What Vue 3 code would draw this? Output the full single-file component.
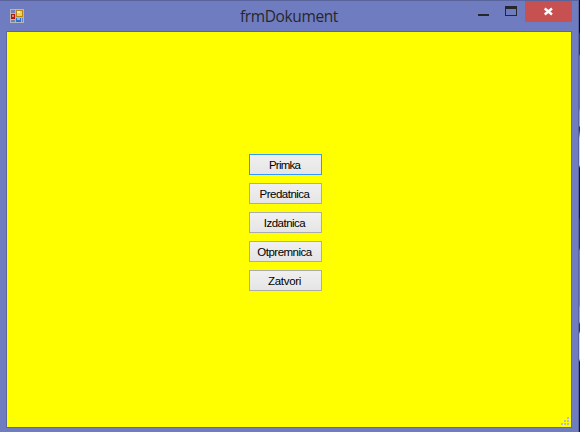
<script setup>
const actions = [
  { label: 'Primka', key: 'primka' },
  { label: 'Predatnica', key: 'predatnica' },
  { label: 'Izdatnica', key: 'izdatnica' },
  { label: 'Otpremnica', key: 'otpremnica' },
  { label: 'Zatvori', key: 'zatvori' },
]
</script>

<template>
  <div class="desktop">
    <div class="window">
      <header class="titlebar">
        <svg class="app-icon" width="14" height="14" viewBox="0 0 14 14" shape-rendering="crispEdges">
          <rect width="14" height="14" fill="#b5b7bd" />
          <rect x="1" y="1" width="4" height="3" fill="#7480b8" />
          <rect x="1" y="5" width="4" height="5" fill="#b11a12" />
          <rect x="2" y="6" width="2" height="2" fill="#e88478" />
          <rect x="1" y="11" width="4" height="2" fill="#7480b8" />
          <rect x="6" y="1" width="7" height="7" fill="#b78614" />
          <rect x="7" y="2" width="5" height="5" fill="#f5cf5a" />
          <rect x="7" y="2" width="3" height="2" fill="#fff0ae" />
          <rect x="6" y="9" width="5" height="4" fill="#2e72cf" />
          <rect x="7" y="9" width="3" height="2" fill="#8bbcf5" />
          <rect x="12" y="9" width="1" height="4" fill="#7480b8" />
        </svg>
        <h1 class="title">frmDokument</h1>
        <div class="controls">
          <svg width="92" height="21" viewBox="0 0 92 21" shape-rendering="crispEdges">
            <rect x="45" y="13" width="11" height="2" fill="#26272b" />
            <path d="M72 5h12v10h-12zM73 8v6h10v-6z" fill="#26272b" fill-rule="evenodd" />
          </svg>
          <button class="close" aria-label="Close">
            <svg width="47" height="21" viewBox="0 0 47 21">
              <path d="M19.7 7.5L27 13.5M27 7.5L19.7 13.5" stroke="#fff" stroke-width="2.4" />
            </svg>
          </button>
        </div>
      </header>
      <main class="client">
        <nav class="actions">
          <button v-for="(a, i) in actions" :key="a.key" class="action" :class="[a.key, { focused: i === 0 }]">
            <span>{{ a.label }}</span>
          </button>
        </nav>
        <svg class="grip" width="8" height="8" viewBox="0 0 8 8" shape-rendering="crispEdges">
          <path d="M6 0h2v2h-2zM3 3h2v2h-2zM6 3h2v2h-2zM0 6h2v2h-2zM3 6h2v2h-2zM6 6h2v2h-2z" fill="#bdbdbd" />
        </svg>
      </main>
    </div>
  </div>
</template>

<style>
body { margin: 0; overflow: hidden; }
</style>

<style scoped>
.desktop {
  box-sizing: border-box;
  width: 580px;
  height: 432px;
  padding-right: 1px;
  background: linear-gradient(#080a0c 0 32px, #3a342c 34px 54px, #5878a0 56px 108px, #b8a280 112px 126px, #35332d 127px 130px, #d0ccd0 138px 165px, #101a18 168px 218px, #35332d 220px 248px, #7184a8 251px 305px, #b8a280 308px 322px, #35332d 324px 331px, #d0ccd0 334px 359px, #101a18 362px 432px);
}
.window {
  box-sizing: border-box;
  display: flex;
  flex-direction: column;
  width: 579px;
  height: 432px;
  border-top: 1px solid #58649b;
  border-right: 1px solid #58649b;
  background: #707cc0;
}
.titlebar {
  display: grid;
  grid-template-columns: 173px 212px 177px;
  height: 30px;
  padding-left: 10px;
}
.app-icon { display: block; margin-top: 8px; }
.title {
  margin: 0;
  justify-self: center;
  font: 400 15.5px/30px "Open Sans", sans-serif;
  letter-spacing: -0.38px;
  color: #26272b;
  white-space: nowrap;
}
.controls { display: flex; justify-content: flex-end; }
.controls svg { display: block; flex: none; }
.close {
  width: 47px;
  height: 21px;
  padding: 0;
  border: 0;
  background: #c75050;
}
.client {
  box-sizing: border-box;
  display: grid;
  width: 566px;
  height: 397px;
  margin-left: 6px;
  border: 1px solid #5c669c;
  background: #ffff00;
}
.actions {
  grid-area: 1 / 1;
  display: flex;
  flex-direction: column;
  gap: 8px;
  padding: 122px 0 0 242px;
}
.action {
  box-sizing: border-box;
  display: flex;
  align-items: center;
  justify-content: center;
  width: 73px;
  height: 21px;
  padding: 2px 2px 0 0;
  border: 1px solid #acacac;
  background: linear-gradient(#f0f0f0, #e5e5e5);
  color: #000;
  font: 11.5px/17px "Liberation Sans", Arial, sans-serif;
  letter-spacing: -0.5px;
  white-space: nowrap;
}
.primka { letter-spacing: -0.8px; }
.zatvori { letter-spacing: -0.3px; }
.focused { border-color: #3399ff; }
.grip { grid-area: 1 / 1; align-self: end; justify-self: end; margin: 0 2px 2px 0; }
</style>
